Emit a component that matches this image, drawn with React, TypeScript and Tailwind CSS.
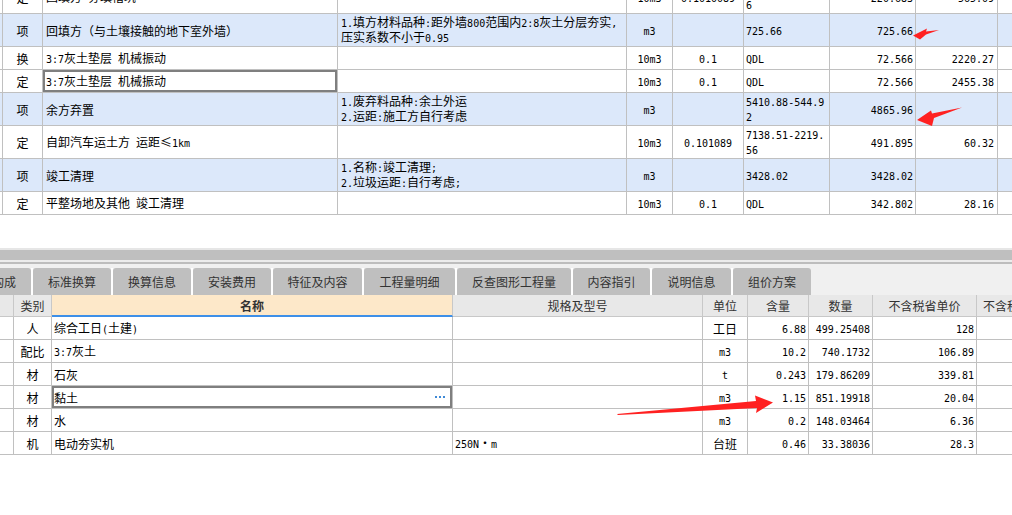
import React from "react";

type TopRow = {
  h: string;
  blue?: boolean;
  sel?: boolean;
  type: string;
  name: string;
  desc?: string;
  unit: string;
  qty?: string;
  expr?: string;
  amount?: string;
  price?: string;
};

const topRows: TopRow[] = [
  { h: "h-[33px]", type: "定", name: "回填方 夯填槽坑", unit: "10m3", qty: "0.1010089", expr: "7138.51-2219.\n6", amount: "220.683", price: "565.09" },
  { h: "h-[33px]", blue: true, type: "项", name: "回填方（与土壤接触的地下室外墙）", desc: "1.填方材料品种:距外墙800范围内2:8灰土分层夯实,\n压实系数不小于0.95", unit: "m3", expr: "725.66", amount: "725.66" },
  { h: "h-[23px]", type: "换", name: "3:7灰土垫层 机械振动", unit: "10m3", qty: "0.1", expr: "QDL", amount: "72.566", price: "2220.27" },
  { h: "h-[23px]", sel: true, type: "定", name: "3:7灰土垫层 机械振动", unit: "10m3", qty: "0.1", expr: "QDL", amount: "72.566", price: "2455.38" },
  { h: "h-[33px]", blue: true, type: "项", name: "余方弃置", desc: "1.废弃料品种:余土外运\n2.运距:施工方自行考虑", unit: "m3", expr: "5410.88-544.9\n2", amount: "4865.96" },
  { h: "h-[33px]", type: "定", name: "自卸汽车运土方 运距≤1km", unit: "10m3", qty: "0.101089", expr: "7138.51-2219.\n56", amount: "491.895", price: "60.32" },
  { h: "h-[33px]", blue: true, type: "项", name: "竣工清理", desc: "1.名称:竣工清理;\n2.垃圾运距:自行考虑;", unit: "m3", expr: "3428.02", amount: "3428.02" },
  { h: "h-[23px]", type: "定", name: "平整场地及其他 竣工清理", unit: "10m3", qty: "0.1", expr: "QDL", amount: "342.802", price: "28.16" },
];

const tabs = [
  { t: "工料机构成", w: "w-[92px]" },
  { t: "标准换算", w: "w-[80px]" },
  { t: "换算信息", w: "w-[80px]" },
  { t: "安装费用", w: "w-[80px]" },
  { t: "特征及内容", w: "w-[91px]" },
  { t: "工程量明细", w: "w-[93px]" },
  { t: "反查图形工程量", w: "w-[116px]" },
  { t: "内容指引", w: "w-[79px]" },
  { t: "说明信息", w: "w-[81px]" },
  { t: "组价方案", w: "w-[80px]" },
];

type BotRow = { type: string; name: string; spec?: string; unit: string; rate: string; qty: string; price: string; sel?: boolean };

const botRows: BotRow[] = [
  { type: "人", name: "综合工日(土建)", unit: "工日", rate: "6.88", qty: "499.25408", price: "128" },
  { type: "配比", name: "3:7灰土", unit: "m3", rate: "10.2", qty: "740.1732", price: "106.89" },
  { type: "材", name: "石灰", unit: "t", rate: "0.243", qty: "179.86209", price: "339.81" },
  { type: "材", name: "黏土", unit: "m3", rate: "1.15", qty: "851.19918", price: "20.04", sel: true },
  { type: "材", name: "水", unit: "m3", rate: "0.2", qty: "148.03464", price: "6.36" },
  { type: "机", name: "电动夯实机", spec: "250N·m", unit: "台班", rate: "0.46", qty: "33.38036", price: "28.3" },
];

// latin runs use a narrow mono face, like the song-ti half width glyphs
const Txt = ({ s }: { s: string }) => {
  const lines = s.split("\n");
  return (
    <div>
      {lines.map((line, li) => (
        <div key={li}>
          {line
            .split(/([\x20-\x7e]+)/)
            .filter(Boolean)
            .map((p, i) =>
              /^[\x20-\x7e]+$/.test(p) ? (
                <span key={i} className="[font-family:'DejaVu_Sans_Mono',monospace] text-[10px] whitespace-pre">
                  {p}
                </span>
              ) : (
                <span key={i}>{p}</span>
              )
            )}
        </div>
      ))}
    </div>
  );
};

const cell = "border-r border-b border-[#c0c0c0] flex items-center overflow-hidden";

const TopTable = () => (
  <div className="h-[215px] overflow-hidden">
    <div className="-mt-[19px]">
      {topRows.map((r, i) => (
        <div
          key={i}
          className={`grid grid-cols-[3px_40px_295px_289px_46px_71px_86px_86px_82px_14px] ${r.h} ${r.blue ? "bg-[#dce8fa]" : "bg-white"}`}
        >
          <div className={cell} />
          <div className={`${cell} justify-center`}>{r.type}</div>
          <div className={`${cell} pl-[3px] relative`}>
            <Txt s={r.name} />
            {r.sel && <div className="absolute inset-0 border-2 border-[#7f7f7f]" />}
          </div>
          <div className={`${cell} pl-[3px]`}>{r.desc && <Txt s={r.desc} />}</div>
          <div className={`${cell} justify-center`}>
            <Txt s={r.unit} />
          </div>
          <div className={`${cell} justify-center`}>{r.qty && <Txt s={r.qty} />}</div>
          <div className={`${cell} pl-[2px]`}>{r.expr && <Txt s={r.expr} />}</div>
          <div className={`${cell} justify-end pr-[2px]`}>{r.amount && <Txt s={r.amount} />}</div>
          <div className={`${cell} justify-end pr-[3px]`}>{r.price && <Txt s={r.price} />}</div>
          <div className="border-b border-[#c0c0c0]" />
        </div>
      ))}
    </div>
  </div>
);

const Splitter = () => (
  <div className="flex flex-col">
    <div className="h-[2px] bg-[#e6e6e6]" />
    <div className="h-[10px] bg-[#bfbfbf]" />
    <div className="h-[2px] bg-[#ececec]" />
    <div className="h-[2px] bg-[#bdbdbd]" />
  </div>
);

const Tabs = () => (
  <div className="h-[31px] bg-[#f0f0f0] pt-[4px] overflow-hidden">
    <div className="flex -ml-[61px] h-[27px]">
      {tabs.map((t) => (
        <div key={t.t} className={`${t.w} shrink-0 border-l-2 border-white`}>
          <div className="h-full bg-[#bfbfbf] rounded-t-[3px] flex items-center justify-center text-[#333]">
            {t.t}
          </div>
        </div>
      ))}
    </div>
  </div>
);

const botCols = "grid grid-cols-[14px_38px_401px_250px_45px_61px_64px_104px_104px]";
const hcell = "border-r border-b border-[#c8c8c8] flex items-center justify-center text-[#333] overflow-hidden whitespace-nowrap";

const BottomTable = () => (
  <div>
    <div className={`${botCols} h-[22px] bg-[#e8e8e8]`}>
      <div className={hcell} />
      <div className={hcell}>类别</div>
      <div className="border-r border-[#c8c8c8] border-b-2 border-b-[#3d8fe8] bg-[#fde8c9] flex items-center justify-center font-bold text-[#333]">
        名称
      </div>
      <div className={hcell}>规格及型号</div>
      <div className={hcell}>单位</div>
      <div className={hcell}>含量</div>
      <div className={hcell}>数量</div>
      <div className={hcell}>不含税省单价</div>
      <div className={`${hcell} justify-start pl-[6px]`}>不含税市场价</div>
    </div>
    {botRows.map((r, i) => (
      <div key={i} className={`${botCols} h-[23px]`}>
        <div className={cell} />
        <div className={`${cell} justify-center`}>{r.type}</div>
        <div className={`${cell} pl-[2px] relative`}>
          <Txt s={r.name} />
          {r.sel && (
            <div className="absolute inset-0 border-2 border-[#7f7f7f] flex items-center justify-end pr-[5px]">
              <div className="flex gap-[2px]">
                <div className="w-[2px] h-[2px] bg-[#3f8ad6]" />
                <div className="w-[2px] h-[2px] bg-[#3f8ad6]" />
                <div className="w-[2px] h-[2px] bg-[#3f8ad6]" />
              </div>
            </div>
          )}
        </div>
        <div className={`${cell} pl-[2px]`}>{r.spec && <Txt s={r.spec} />}</div>
        <div className={`${cell} justify-center`}>
          <Txt s={r.unit} />
        </div>
        <div className={`${cell} justify-end pr-[2px]`}>
          <Txt s={r.rate} />
        </div>
        <div className={`${cell} justify-end pr-[2px]`}>
          <Txt s={r.qty} />
        </div>
        <div className={`${cell} justify-end pr-[2px]`}>
          <Txt s={r.price} />
        </div>
        <div className={cell} />
      </div>
    ))}
  </div>
);

const Arrows = () => (
  <svg className="absolute inset-0 pointer-events-none" width="1012" height="515" viewBox="0 0 1012 515">
    <polygon fill="#ff2121" points="913,35.5 927,28.5 926,31.5 939,30 926,34.5 920,39.5" />
    <polygon fill="#ff2121" points="917,120 931,110.5 932,113.5 962,107.5 934,118 932,126" />
    <polygon fill="#ff2121" points="617,414 756,401 755,395.5 773,402.5 756,413 757,408 618,415" />
  </svg>
);

export default function App() {
  return (
    <div className="relative w-[1012px] h-[515px] overflow-hidden bg-white text-black text-[12px] leading-[13px] [font-family:'Noto_Sans_CJK_SC',sans-serif]">
      <TopTable />
      <div className="h-[33px]" />
      <Splitter />
      <Tabs />
      <BottomTable />
      <Arrows />
    </div>
  );
}
